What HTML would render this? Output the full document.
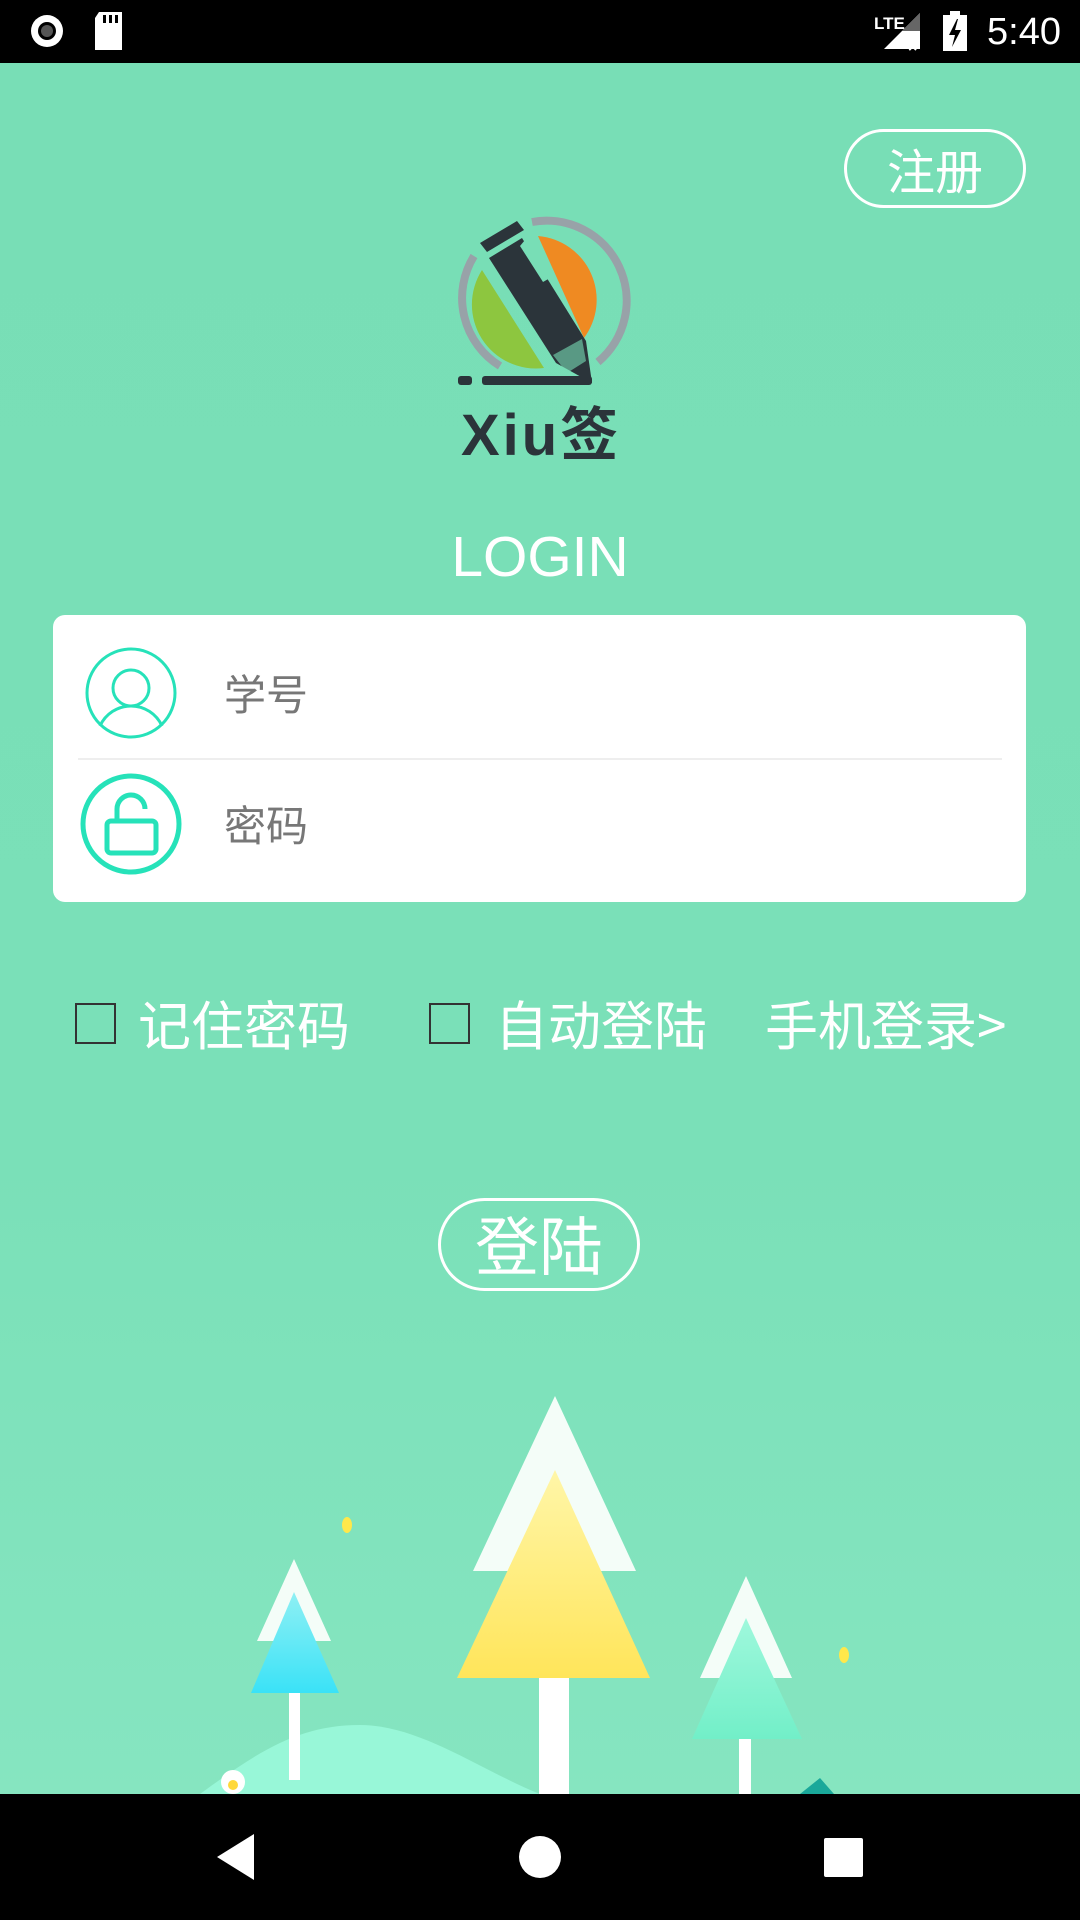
<!DOCTYPE html>
<html><head><meta charset="utf-8"><style>
*{margin:0;padding:0;box-sizing:border-box}
body{width:1080px;height:1920px;position:relative;overflow:hidden;font-family:"Liberation Sans","Noto Sans CJK SC",sans-serif;background:linear-gradient(180deg,#78deb6 0%,#7ae0b8 60%,#88e6c2 100%)}
.abs{position:absolute}
.cn{font-family:"Noto Sans CJK SC",sans-serif}
</style></head><body>
<div class="abs" style="left:0;top:0;width:1080px;height:63px;background:#000"></div>
<svg class="abs" style="left:0;top:0" width="1080" height="63">
<circle cx="47" cy="31" r="16" fill="#fff"/><circle cx="47" cy="31" r="9" fill="#000"/><circle cx="47" cy="31" r="6" fill="#555"/>
<path d="M99 12h23v38h-27v-32z" fill="#fff"/><rect x="103" y="15" width="3" height="8" fill="#000"/><rect x="109" y="15" width="3" height="8" fill="#000"/><rect x="115" y="15" width="3" height="8" fill="#000"/>
<text x="874" y="29" fill="#fff" font-size="17" font-weight="bold" font-family="Liberation Sans">LTE</text>
<path d="M884 49l36-36v36z" fill="#fff"/><path d="M902 31l18-18v18z" fill="#666"/>
<text x="908" y="52" fill="#fff" font-size="16" font-weight="bold">×</text>
<rect x="943" y="15" width="24" height="36" fill="#fff"/><rect x="950" y="11" width="10" height="5" fill="#fff"/>
<path d="M957 19l-8 16h6l-3 12 9-17h-6l3-11z" fill="#000"/>
<text x="987" y="44" fill="#fff" font-size="38" font-family="Liberation Sans">5:40</text>
</svg>

<div class="abs cn" style="left:844px;top:129px;width:182px;height:79px;border:3px solid #fff;border-radius:40px;color:#fff;font-size:48px;line-height:72px;text-align:center">注册</div>

<svg class="abs" style="left:420px;top:200px" width="240" height="270" viewBox="420 200 240 270">
<path d="M532 222A80 80 0 0 1 598 362" stroke="#98a2a8" stroke-width="8" fill="none"/>
<path d="M474 256A80 80 0 0 0 500 366" stroke="#98a2a8" stroke-width="8" fill="none"/>
<path d="M538 236A64 64 0 0 1 584 338z" fill="#ef8a22"/>
<path d="M482 270A64 64 0 0 0 544 368z" fill="#8dc63f"/>
<path d="M489 258l33-20 64 103 6 42-36-20z" fill="#2b343a"/>
<path d="M480 243l37-22 7 9-37 22z" fill="#2b343a"/>
<path d="M525 240l25 38 -7 4 -23-36z" fill="#78deb6"/>
<path d="M553 355l29-16 4 22-19 12z" fill="#78deb6" opacity="0.6"/>
<rect x="458" y="376" width="14" height="9" rx="3" fill="#2b343a"/>
<rect x="482" y="376" width="110" height="9" rx="3" fill="#2b343a"/>
<text x="461" y="455" font-size="58" font-weight="bold" letter-spacing="3" fill="#2b343a" font-family="Liberation Sans,Noto Sans CJK SC,sans-serif">Xiu签</text>
</svg>

<div class="abs" style="left:0;width:1080px;top:522px;text-align:center;color:#fff;font-size:57px;line-height:70px">LOGIN</div>

<div class="abs" style="left:53px;top:615px;width:973px;height:287px;background:#fff;border-radius:12px"></div>
<div class="abs" style="left:78px;top:758px;width:924px;height:2px;background:#eee"></div>
<svg class="abs" style="left:0;top:600px" width="200" height="300">
<circle cx="131" cy="93" r="44" stroke="#26e2b9" stroke-width="3" fill="none"/>
<circle cx="131" cy="88" r="18" stroke="#26e2b9" stroke-width="3" fill="none"/>
<path d="M100 126A34 34 0 0 1 162 126" stroke="#26e2b9" stroke-width="3" fill="none"/>
<circle cx="131" cy="224" r="48" stroke="#26e2b9" stroke-width="5" fill="none"/>
<rect x="107" y="221" width="49" height="32" rx="4" stroke="#26e2b9" stroke-width="5" fill="none"/>
<path d="M117 221v-12a14 14 0 0 1 28 0" stroke="#26e2b9" stroke-width="5" fill="none"/>
</svg>
<div class="abs cn" style="left:224px;top:665px;font-size:42px;color:#777;line-height:56px">学号</div>
<div class="abs cn" style="left:224px;top:796px;font-size:42px;color:#777;line-height:56px">密码</div>

<div class="abs" style="left:75px;top:1003px;width:41px;height:41px;border:2px solid #333"></div>
<div class="abs cn" style="left:138px;top:990px;font-size:53px;color:#fff;line-height:66px">记住密码</div>
<div class="abs" style="left:429px;top:1003px;width:41px;height:41px;border:2px solid #333"></div>
<div class="abs cn" style="left:495px;top:990px;font-size:53px;color:#fff;line-height:66px">自动登陆</div>
<div class="abs cn" style="left:765px;top:990px;font-size:53px;color:#fff;line-height:66px">手机登录&gt;</div>

<div class="abs cn" style="left:438px;top:1198px;width:202px;height:93px;border:3px solid #fff;border-radius:47px;color:#fff;font-size:64px;line-height:85px;text-align:center">登陆</div>

<svg class="abs" style="left:0;top:1380px" width="1080" height="414">
<defs>
<linearGradient id="y" x1="0" y1="0" x2="0" y2="1"><stop offset="0" stop-color="#fff6a8"/><stop offset="1" stop-color="#ffe55a"/></linearGradient>
<linearGradient id="b" x1="0" y1="0" x2="0" y2="1"><stop offset="0" stop-color="#8ff0f4"/><stop offset="1" stop-color="#3ae2f7"/></linearGradient>
<linearGradient id="g" x1="0" y1="0" x2="0" y2="1"><stop offset="0" stop-color="#9ff8dc"/><stop offset="1" stop-color="#72efc8"/></linearGradient>
</defs>
<path d="M200 414C260 370 300 345 360 345C420 345 480 390 540 414z" fill="#98f7d8"/>
<rect x="539" y="290" width="30" height="130" fill="#fff"/>
<path d="M555 16L473 191h163z" fill="#f4fdf8"/>
<path d="M555 90L457 298h193z" fill="url(#y)"/>
<rect x="289" y="300" width="11" height="100" fill="#fff"/>
<path d="M294 179L257 261h74z" fill="#f4fdf8"/>
<path d="M294 212L251 313h88z" fill="url(#b)"/>
<rect x="739" y="355" width="12" height="60" fill="#fff"/>
<path d="M746 196L700 298h92z" fill="#f4fdf8"/>
<path d="M746 238L692 359h110z" fill="url(#g)"/>
<ellipse cx="347" cy="145" rx="5" ry="8" fill="#ffe84a"/>
<ellipse cx="844" cy="275" rx="5" ry="8" fill="#ffe84a"/>
<circle cx="233" cy="402" r="12" fill="#fff"/><circle cx="233" cy="405" r="5" fill="#ffd83a"/>
<path d="M800 414l20-16 14 16z" fill="#1aa89a"/>
</svg>

<div class="abs" style="left:0;top:1794px;width:1080px;height:126px;background:#000"></div>
<svg class="abs" style="left:0;top:1794px" width="1080" height="126">
<path d="M254 40v46l-37-23z" fill="#fff"/>
<circle cx="540" cy="63" r="21" fill="#fff"/>
<rect x="824" y="44" width="39" height="39" rx="2" fill="#fff"/>
</svg>
</body></html>
